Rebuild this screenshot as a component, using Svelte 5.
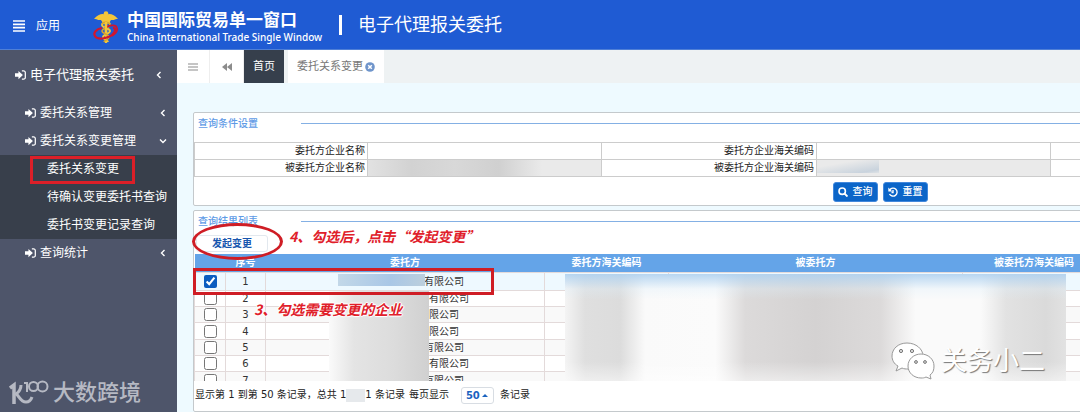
<script lang="ts">
    type Company = { id: number; nameWidth: number; checked: boolean };

    let companies: Company[] = $state([
        { id: 1, nameWidth: 78, checked: true },
        { id: 2, nameWidth: 88, checked: false },
        { id: 3, nameWidth: 68, checked: false },
        { id: 4, nameWidth: 68, checked: false },
        { id: 5, nameWidth: 78, checked: false },
        { id: 6, nameWidth: 88, checked: false },
        { id: 7, nameWidth: 78, checked: false }
    ]);

    const submenu = ['委托关系变更', '待确认变更委托书查询', '委托书变更记录查询'];

    let activeItem = $state(submenu[0]);
    let pageSize = $state('50');
    let client = $state('');
    let clientCode = $state('');

    function reset() {
        client = '';
        clientCode = '';
    }
</script>

{#snippet enterIcon()}
    <svg class="enter" viewBox="0 0 16 14" aria-hidden="true">
        <path d="M0 4.500h5V1L11.500 7 5 13V9.500H0z" fill="currentColor" />
        <path d="M10 1h2.500a2.500 2.500 0 0 1 2.500 2.500v7a2.500 2.500 0 0 1-2.500 2.500H10" fill="none" stroke="currentColor" stroke-width="1.800" />
    </svg>
{/snippet}

{#snippet chevron(open: boolean)}
    <svg class="chevron" viewBox="0 0 8 8" aria-hidden="true">
        <path d={open ? 'M1 2.500l3 3 3-3' : 'M5.500 1l-3 3 3 3'} fill="none" stroke="currentColor" stroke-width="1.400" />
    </svg>
{/snippet}

<div class="shell" lang="zh-CN">
    <header class="topbar">
        <button class="apps">
            <svg viewBox="0 0 12 12" width="12" height="12" aria-hidden="true">
                <path d="M0 1h12M0 4.300h12M0 7.700h12M0 11h12" stroke="#fff" stroke-width="1.700" />
            </svg>
            应用
        </button>
        <svg class="emblem" viewBox="0 0 26 34" aria-hidden="true">
            <path d="M13 5C10 3 5 4 1 9c2 0 3 0 4 1l3 0 2 3 3 1 3-1 2-3 3 0c1-1 2-1 4-1-4-5-9-6-12-4z" fill="#f3c63a" />
            <circle cx="13" cy="3.500" r="2.300" fill="#f3c63a" />
            <path d="M13 5v28" stroke="#f3c63a" stroke-width="2.400" />
            <path d="M17 14c-1-3-8-2-8 1s8 3 8 6-7 3-7 6 5 3 5 5" fill="none" stroke="#f3c63a" stroke-width="1.900" />
            <path d="M9 14c1-3 8-2 8 1s-8 3-8 6 7 3 7 6-5 3-5 5" fill="none" stroke="#d8a42c" stroke-width="1.500" />
            <path d="M9 18c-6 1-9 5-7 8 2 4 12 3 17-1 4-4 4-7 1-7" fill="none" stroke="#d2162d" stroke-width="2.200" />
            <path d="M12 18c4-3 11-4 12 0 1 3-2 6-5 8" fill="none" stroke="#d2162d" stroke-width="1.700" />
            <path d="M13 12v11" stroke="#f3c63a" stroke-width="2.400" />
        </svg>
        <div class="brand">
            <strong>中国国际贸易单一窗口</strong>
            <span>China International Trade Single Window</span>
        </div>
        <span class="divider"></span>
        <h1>电子代理报关委托</h1>
    </header>

    <div class="body">
        <nav class="sidebar">
            <a class="root" href="#system">{@render enterIcon()}<span>电子代理报关委托</span>{@render chevron(false)}</a>
            <a class="group" href="#relation">{@render enterIcon()}<span>委托关系管理</span>{@render chevron(false)}</a>
            <a class="group" href="#change">{@render enterIcon()}<span>委托关系变更管理</span>{@render chevron(true)}</a>
            <ul>
                {#each submenu as item}
                    <li class:marked={item === activeItem}>
                        <a href="#{item}" onclick={() => (activeItem = item)}>{item}</a>
                    </li>
                {/each}
            </ul>
            <a class="group" href="#stats">{@render enterIcon()}<span>查询统计</span>{@render chevron(false)}</a>
        </nav>

        <main>
            <div class="tabs">
                <button class="tool" aria-label="菜单">
                    <svg viewBox="0 0 10 8" width="10" height="8"><path d="M0 1h10M0 4h10M0 7h10" stroke="#8c8c8c" stroke-width="1.200" /></svg>
                </button>
                <button class="tool back" aria-label="向左">
                    <svg viewBox="0 0 10 8" width="10" height="8"><path d="M5 0v8L0 4zM10 0v8L5 4z" fill="#8c8c8c" /></svg>
                </button>
                <button class="tab home">首页</button>
                <button class="tab current">
                    委托关系变更
                    <svg viewBox="0 0 10 10" width="10" height="10" aria-hidden="true">
                        <circle cx="5" cy="5" r="4.800" fill="#6f95cb" />
                        <path d="M3.200 3.200l3.600 3.600M6.800 3.200L3.200 6.800" stroke="#fff" stroke-width="1.500" />
                    </svg>
                </button>
            </div>

            <div class="workspace">
                <section class="panel">
                    <h2>查询条件设置</h2>
                    <table class="query">
                        <tbody>
                            <tr>
                                <th><label for="client">委托方企业名称</label></th>
                                <td class="wide"><input id="client" bind:value={client} /></td>
                                <th class="second"><label for="client-code">委托方企业海关编码</label></th>
                                <td class="wide"><input id="client-code" bind:value={clientCode} /></td>
                                <td></td>
                            </tr>
                            <tr>
                                <th><label for="agent">被委托方企业名称</label></th>
                                <td class="locked"><input id="agent" readonly /><i class="smudge long"></i></td>
                                <th><label for="agent-code">被委托方企业海关编码</label></th>
                                <td class="locked"><input id="agent-code" readonly /><i class="smudge short"></i></td>
                                <td></td>
                            </tr>
                        </tbody>
                    </table>
                    <div class="actions">
                        <button>
                            <svg viewBox="0 0 10 10" width="10" height="10" aria-hidden="true"><circle cx="4.200" cy="4.200" r="3.200" fill="none" stroke="#fff" stroke-width="1.600" /><path d="M6.500 6.500l3 3" stroke="#fff" stroke-width="1.900" /></svg>
                            查询
                        </button>
                        <button onclick={reset}>
                            <svg viewBox="0 0 10 10" width="10" height="10" aria-hidden="true"><path d="M1.800 2.800a4 4 0 1 1-.3 4.200M5 3v2.500H3.500" fill="none" stroke="#fff" stroke-width="1.400" /><path d="M.3.500v4h4z" fill="#fff" /></svg>
                            重置
                        </button>
                    </div>
                </section>

                <section class="panel results">
                    <h2>查询结果列表</h2>
                    <div class="toolbar"><button>发起变更</button></div>
                    <div class="grid">
                        <table class="list">
                            <colgroup>
                                <col class="c-check" /><col class="c-no" /><col class="c-name" /><col class="c-code" /><col class="c-agent" /><col class="c-agent-code" /><col />
                            </colgroup>
                            <thead>
                                <tr><th></th><th>序号</th><th>委托方</th><th>委托方海关编码</th><th>被委托方</th><th>被委托方海关编码</th><th></th></tr>
                            </thead>
                            <tbody>
                                {#each companies as company (company.id)}
                                    <tr class:selected={company.checked}>
                                        <td><input type="checkbox" aria-label="选择第{company.id}行" bind:checked={company.checked} /></td>
                                        <td>{company.id}</td>
                                        <td><span class="hidden-name" style="width: {company.nameWidth}px"></span>有限公司</td>
                                        <td></td><td></td><td></td><td></td>
                                    </tr>
                                {/each}
                            </tbody>
                        </table>
                        <i class="mask first"></i>
                        <i class="mask names"></i>
                        <i class="mask details"></i>
                    </div>
                    <div class="pager">
                        <span>显示第 1 到第 50 条记录，总共 1</span>
                        <i class="total-mask"></i>
                        <span>1 条记录</span>
                        <label for="page-size">每页显示</label>
                        <div class="size">
                            <select id="page-size" bind:value={pageSize}>
                                <option>50</option>
                                <option>100</option>
                            </select>
                            <svg viewBox="0 0 6 3" width="6" height="3" aria-hidden="true"><path d="M0 3l3-3 3 3z" fill="#1a62bf" /></svg>
                        </div>
                        <span>条记录</span>
                    </div>
                    <i class="ring"></i>
                    <i class="row-box"></i>
                    <p class="note step4">4、勾选后，点击“发起变更”</p>
                    <p class="note step3">3、勾选需要变更的企业</p>
                </section>
            </div>
        </main>
    </div>

    <div class="watermark left">
        <svg viewBox="0 0 40 28" width="40" height="28" aria-hidden="true">
            <g fill="none" stroke="currentColor" stroke-width="3">
                <path d="M1 9l4-3v19" stroke-width="3.500" />
                <path d="M12 6c0 5-2 7-5 9 3 1 4 8 10 8 3 0 5-2 6-5" />
                <path d="M15 4h3v9" stroke-width="2" />
                <circle cx="24.500" cy="7.500" r="4.500" stroke-width="2" />
                <circle cx="33.500" cy="7.500" r="5" stroke-width="2" />
            </g>
        </svg>
        <span>大数跨境</span>
    </div>

    <div class="watermark right">
        <svg viewBox="0 0 44 38" width="44" height="38" aria-hidden="true">
            <g fill="#fff" stroke="#999" stroke-width="1">
                <path d="M16 1C7 1 1 7 1 14c0 4 2 8 6 10l-2 5 6-3c2 1 4 1 6 1 8 0 15-6 15-13S25 1 16 1z" />
                <path d="M30 12c-7 0-13 5-13 12s6 12 13 12c2 0 3 0 5-1l5 2-1-4c3-2 4-5 4-9 0-7-6-12-13-12z" />
            </g>
            <g fill="#ddd" stroke="#777" stroke-width="1">
                <circle cx="10" cy="9" r="1.600" /><circle cx="21" cy="9" r="1.600" />
                <circle cx="25" cy="20" r="1.400" /><circle cx="34" cy="20" r="1.400" />
            </g>
        </svg>
        <span>关务小二</span>
    </div>
</div>

<style>
    :global(body) {
        background: #eefaff;
    }

    .shell {
        display: flex;
        flex-direction: column;
        height: 100vh;
        position: relative;
        overflow: hidden;
        font-family: "DejaVu Sans", "Noto Sans CJK SC", sans-serif;
        font-size: 10px;
        line-height: 16px;
        color: #333;
    }

    button, input, select {
        font: inherit;
        color: inherit;
        margin: 0;
        padding: 0;
        border: 0;
        background: none;
        box-sizing: border-box;
    }

    button {
        display: flex;
        align-items: center;
        cursor: pointer;
    }

    a {
        color: inherit;
        text-decoration: none;
    }

    /* header */
    .topbar {
        display: flex;
        align-items: center;
        height: 50px;
        flex-shrink: 0;
        box-sizing: border-box;
        padding-left: 13px;
        background: #1f5bd3;
        border-bottom: 1px solid #4f7fd6;
        color: #fff;
    }

    .apps {
        gap: 11px;
        padding-top: 3px;
        font-size: 12px;
    }

    .emblem {
        width: 26px;
        height: 34px;
        margin: 4px 8px 0 33px;
    }

    .brand {
        display: flex;
        flex-direction: column;
        width: 212px;
        padding-top: 5px;
    }

    .brand strong {
        font-size: 17px;
        line-height: 20px;
    }

    .brand span {
        font-family: "Noto Sans", sans-serif;
        font-size: 10px;
        line-height: 14px;
        font-weight: 500;
        white-space: nowrap;
    }

    .divider {
        width: 3px;
        height: 20px;
        background: #fff;
    }

    h1 {
        margin: 0 0 0 16px;
        font-size: 18px;
        line-height: 24px;
        font-weight: 400;
    }

    .body {
        display: flex;
        flex: 1;
        min-height: 0;
    }

    /* side menu */
    .sidebar {
        width: 177px;
        flex-shrink: 0;
        background: #4e556a;
        color: #fff;
        font-size: 12px;
    }

    .sidebar > a {
        display: flex;
        align-items: center;
        height: 28px;
        padding: 0 10px 0 25px;
    }

    .sidebar > a.root {
        height: 49px;
        padding: 0 14px 0 15px;
        font-size: 13px;
    }

    .enter {
        width: 11px;
        height: 10px;
        margin-right: 4px;
    }

    .chevron {
        width: 8px;
        height: 8px;
        margin-left: auto;
    }

    .sidebar ul {
        list-style: none;
        margin: 0;
        padding: 0;
        background: #383f4b;
    }

    .sidebar li {
        height: 28px;
        position: relative;
    }

    .sidebar li a {
        display: block;
        padding-left: 47px;
        line-height: 28px;
        white-space: nowrap;
    }

    .marked::after {
        content: "";
        position: absolute;
        top: 1px;
        left: 30px;
        width: 99px;
        height: 22px;
        border: 3px solid #dc1f28;
        pointer-events: none;
    }

    /* tabs */
    main {
        flex: 1;
        min-width: 0;
        display: flex;
        flex-direction: column;
        overflow: hidden;
    }

    .tabs {
        display: flex;
        height: 33px;
        flex-shrink: 0;
        background: #eef2f3;
        font-size: 11px;
    }

    .tool {
        width: 33px;
        justify-content: center;
        background: #fff;
        border-right: 1px solid #eee;
    }

    .tool.back {
        width: 34px;
    }

    .tab {
        padding: 0 9px;
        background: #fff;
        color: #777;
    }

    .tab.home {
        background: #363f4c;
        color: #fff;
        margin-right: 4px;
    }

    .tab.current {
        gap: 2px;
        padding: 0 9px;
    }

    .workspace {
        flex: 1;
        display: flex;
        flex-direction: column;
        gap: 4px;
        min-width: 1374px;
        padding: 29px 16px 0;
        background: #eefaff;
    }

    .panel {
        border: 1px solid #c4c9cc;
        border-radius: 2px;
        background: #fff;
    }

    h2 {
        display: flex;
        align-items: center;
        gap: 43px;
        height: 21px;
        margin: 0 0 8px;
        padding-left: 4px;
        font-size: 10px;
        font-weight: 500;
        color: #5f9be6;
    }

    h2::after {
        content: "";
        flex: 1;
        height: 1px;
        background: #84b0e4;
    }

    table {
        border-collapse: collapse;
        table-layout: fixed;
        width: 100%;
    }

    /* search form */
    .query th,
    .query td {
        position: relative;
        height: 16px;
        padding: 0;
        border: 1px solid #ccc;
    }

    .query th {
        width: 170px;
        padding-right: 2px;
        text-align: right;
        font-weight: 400;
        color: #222;
    }

    .query th.second {
        width: 212px;
    }

    .query .wide {
        width: 233px;
    }

    .query input {
        display: block;
        width: 100%;
        height: 16px;
    }

    .query .locked {
        background: #eaeaea;
    }

    .smudge {
        position: absolute;
        top: 0;
        left: 0;
        height: 16px;
    }

    .smudge.long {
        width: 174px;
        background: linear-gradient(90deg, #e2e2e2, #d2d2d2 25%, #d8d8d8 50%, #d0d0d0 75%, #eaeaea);
    }

    .smudge.short {
        width: 62px;
        height: 13px;
        background: linear-gradient(170deg, #eaeaea 30%, #c9d3dd 85%, #dfe3e6);
    }

    .actions {
        display: flex;
        justify-content: center;
        gap: 5px;
        padding: 5px 0 3px;
    }

    .actions button {
        height: 20px;
        gap: 5px;
        padding: 0 4px;
        border: 1px solid #4288dc;
        border-radius: 3px;
        background: #0b65c8;
        color: #fff;
        font-weight: 500;
    }

    /* results */
    .results {
        position: relative;
        flex: 1;
    }

    .results h2 {
        margin-bottom: 3px;
    }

    .toolbar {
        padding: 0 2px 2px;
    }

    .toolbar button {
        height: 17px;
        padding: 0 15px;
        border: 1px solid #e2e8ee;
        border-radius: 3px;
        color: #1756ae;
        font-weight: 700;
    }

    .grid {
        position: relative;
        height: 127px;
        overflow: hidden;
    }

    .c-check { width: 31px; }
    .c-no { width: 40px; }
    .c-name { width: 279px; }
    .c-code { width: 124px; }
    .c-agent { width: 294px; }
    .c-agent-code { width: 143px; }

    .list th {
        height: 18px;
        padding: 0;
        background: #64a4e8;
        color: #fff;
        font-weight: 700;
    }

    .list td {
        height: 15px;
        padding: 0;
        border: 1px solid #e3dada;
        line-height: 15px;
        text-align: center;
    }

    .list tr:nth-child(odd) td {
        background: #f9f9f9;
    }

    .list tr:nth-child(3n + 1) td {
        height: 16px;
    }

    .list tr.selected td {
        height: 17px;
        background: #eef9ff;
    }

    .list input {
        display: block;
        width: 13px;
        height: 13px;
        margin: 0 auto;
        accent-color: #0b5cc0;
    }

    .hidden-name {
        display: inline-block;
    }

    .mask {
        position: absolute;
    }

    .mask.first {
        top: 20px;
        left: 144px;
        width: 87px;
        height: 12px;
        background: linear-gradient(100deg, #c3d8e8, #a9c7e6 60%, #bccfdd);
    }

    .mask.names {
        top: 37px;
        left: 135px;
        width: 100px;
        bottom: 0;
        background: linear-gradient(90deg, #fafafa, #e4e4e4 25%, #dcdcdc 65%, #d0d0d0);
    }

    .mask.details {
        top: 20px;
        left: 371px;
        width: 501px;
        bottom: 0;
        background:
            linear-gradient(180deg, rgba(176, 210, 240, 0.9), rgba(220, 238, 250, 0.3) 14%, rgba(255, 255, 255, 0) 24%, rgba(255, 255, 255, 0) 82%, rgba(255, 255, 255, 0.5)),
            linear-gradient(90deg, #f4f4f4, #dfdfdf 4%, #dcdcdc 11%, #fafafa 16%, #fbfbfb 30%, #dcdada 36%, #d4d2d2 50%, #dcdada 63%, #fafafa 70%, #fafafa 83%, #e2e2e2 88%, #dadada 96%, #e2e2e2);
    }

    .pager {
        display: flex;
        align-items: center;
        height: 28px;
        padding-left: 1px;
        color: #222;
    }

    .total-mask {
        width: 19px;
        height: 13px;
        background: #e6e9ec;
    }

    .pager label {
        margin-left: 4px;
    }

    .size {
        display: flex;
        align-items: center;
        height: 17px;
        margin: 0 6px 0 12px;
        padding: 0 5px 0 4px;
        box-sizing: border-box;
        border: 1px solid #d8dde3;
        border-radius: 3px;
    }

    .size select {
        appearance: none;
        width: 16px;
        height: 15px;
        color: #1a62bf;
        font-weight: 700;
    }

    /* walkthrough marks */
    .ring,
    .row-box {
        position: absolute;
        box-sizing: border-box;
        border: 3px solid #cf1d25;
        pointer-events: none;
    }

    .ring {
        top: 12px;
        left: -2px;
        width: 91px;
        height: 37px;
        border-radius: 50%;
    }

    .row-box {
        top: 57px;
        left: -1px;
        width: 301px;
        height: 27px;
    }

    .note {
        position: absolute;
        margin: 0;
        font-family: "Noto Sans CJK SC", sans-serif;
        font-size: 14px;
        line-height: 20px;
        font-weight: 700;
        font-style: italic;
        color: #e0202a;
        white-space: nowrap;
        text-shadow: 1px 0 #fff, -1px 0 #fff, 0 1px #fff, 0 -1px #fff, 0 0 3px #fff;
    }

    .step4 {
        top: 15px;
        left: 95px;
    }

    .step3 {
        top: 88px;
        left: 60px;
    }

    .watermark {
        position: absolute;
        display: flex;
        align-items: center;
        white-space: nowrap;
        pointer-events: none;
    }

    .watermark.left {
        left: 9px;
        bottom: 5px;
        gap: 4px;
        color: #b6b9c3;
        font-size: 22px;
        line-height: 28px;
        font-weight: 500;
    }

    .watermark.right {
        right: 35px;
        bottom: 32px;
        gap: 6px;
        color: #fff;
        font-size: 26px;
        line-height: 34px;
        text-shadow: 1px 1px 1px #777;
    }
</style>
